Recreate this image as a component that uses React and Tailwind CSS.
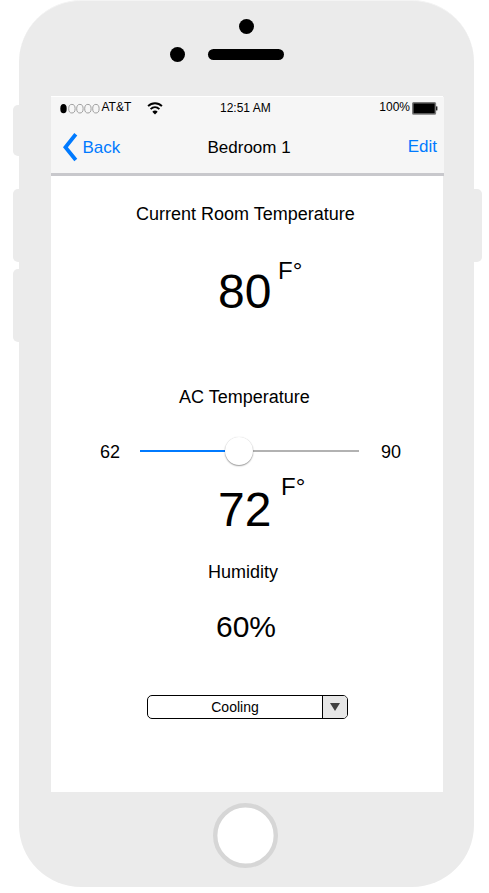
function SideButton({ className }) {
  return <span className={`absolute bg-[#ebebeb] ${className}`} />;
}

function SignalDots() {
  return (
    <svg className="mt-[5px] h-3 w-10 shrink-0" viewBox="0 0 40 12" fill="none">
      <ellipse cx="3.5" cy="6.7" rx="3.2" ry="4.6" fill="#000" />
      {[11.9, 19.9, 27.9, 35.9].map((cx) => (
        <ellipse key={cx} cx={cx} cy="6.7" rx="3.2" ry="4.3" stroke="#8a8a8a" strokeWidth="0.8" />
      ))}
    </svg>
  );
}

function WifiIcon() {
  return (
    <svg className="ml-4 mt-[5px] h-[13px] w-4 shrink-0" viewBox="0 0 16 13" fill="none" stroke="#000">
      <path d="M1.1 4.1C5 .2 11 .2 14.9 4.1" strokeWidth="1.9" />
      <path d="M3.6 7.1C6.2 4.7 9.8 4.7 12.4 7.1" strokeWidth="1.9" />
      <path d="M5.3 9.7C6.8 8.1 9.2 8.1 10.7 9.7L8 12.6Z" fill="#000" stroke="none" />
    </svg>
  );
}

function BatteryIcon() {
  return (
    <svg className="ml-[2px] mt-1 h-[14px] w-[26px] shrink-0" viewBox="0 0 26 14">
      <rect x="0.8" y="1.8" width="22.6" height="11.2" rx="0.8" fill="#000" stroke="#7a7a7a" strokeWidth="1.5" />
      <rect x="24" y="5.4" width="1.4" height="4" fill="#222" />
    </svg>
  );
}

function StatusBar() {
  return (
    <div className="flex h-[26px] items-start text-[12px] leading-[14px]">
      <div className="flex w-[168px] items-start pl-[9px]">
        <SignalDots />
        <span className="ml-[1.5px] mt-[3px]">AT&amp;T</span>
        <WifiIcon />
      </div>
      <span className="mt-1 w-[54px] pl-px whitespace-nowrap">12:51 AM</span>
      <div className="flex flex-1 items-start justify-end pr-[6px]">
        <span className="mt-[3px]">100%</span>
        <BatteryIcon />
      </div>
    </div>
  );
}

function NavBar() {
  return (
    <div className="flex flex-1 items-start text-[17px] leading-5">
      <button className="flex w-[156.5px] items-start pl-[12px] text-[#007aff]">
        <svg className="mt-[10px] h-[29px] w-[15px] shrink-0" viewBox="0 0 15 29" fill="none">
          <path d="M12.8 1.2L2.4 14.2L12.8 27" stroke="#007aff" strokeWidth="3.8" />
        </svg>
        <span className="ml-[4.5px] mt-[15px]">Back</span>
      </button>
      <span className="mt-[15px] whitespace-nowrap">Bedroom 1</span>
      <button className="ml-auto mr-[7px] mt-[14px] text-[#007aff]">Edit</button>
    </div>
  );
}

function Reading({ value, className, unitClass }) {
  return (
    <div className={`flex items-start pl-[167px] leading-none ${className}`}>
      <span className="mt-auto w-[53px] text-[48px]">{value}</span>
      <span className={`text-[24px] ${unitClass}`}>F°</span>
    </div>
  );
}

function TemperatureSlider({ min, max, value }) {
  const position = ((value - min) / (max - min)) * 100;
  return (
    <div className="mt-[29px] flex h-[30px] items-center pl-[49px] text-[18px] leading-5">
      <span className="mt-px w-[40px]">{min}</span>
      <div className="relative h-[2px] w-[219px] bg-[#b2b2b2]">
        <div className="h-full bg-[#007aff]" style={{ width: `${position}%` }} />
        <span className="absolute left-[84.5px] top-[-13.5px] size-[28.5px] rounded-full bg-white shadow-[0_1px_1.5px_rgba(0,0,0,0.4),0_0_1px_rgba(0,0,0,0.15)]" />
      </div>
      <span className="ml-[22px] mt-px">{max}</span>
    </div>
  );
}

function ModeSelect() {
  return (
    <button className="ml-[96px] mt-[53px] flex h-6 w-[201px] overflow-hidden rounded-[5px] border border-black bg-white text-[14px] leading-[22px]">
      <span className="flex-1 text-center">Cooling</span>
      <span className="flex h-full w-[25px] items-center justify-center border-l border-black bg-[#e6e6e6]">
        <svg className="h-2 w-[10px]" viewBox="0 0 10 8">
          <path d="M0 0H10L5 8Z" fill="#404040" />
        </svg>
      </span>
    </button>
  );
}

export default function App() {
  return (
    <div className="h-[893px] w-[489px] overflow-hidden bg-white pl-[19px] font-['Liberation_Sans',Arial,sans-serif] text-black">
      <div className="relative flex h-[887px] w-[455px] flex-col rounded-[62px] bg-[#ebebeb] border-t border-[#f4f4f4]">
        <SideButton className="left-[-6px] top-[104px] h-[51px] w-[6px] rounded-l-[5px]" />
        <SideButton className="left-[-6px] top-[188px] h-[73px] w-[6px] rounded-l-[5px]" />
        <SideButton className="left-[-6px] top-[268px] h-[73px] w-[6px] rounded-l-[5px]" />
        <SideButton className="right-[-8px] top-[188px] h-[73px] w-[8px] rounded-r-[5px]" />

        <div className="flex h-[95px] shrink-0 flex-col pt-[18px]">
          <span className="ml-[220px] size-[15px] rounded-full bg-black" />
          <div className="mt-[13px] flex items-center pl-[151px]">
            <span className="size-[15px] rounded-full bg-black" />
            <span className="ml-[23px] h-[11px] w-[76px] rounded-full bg-black" />
          </div>
        </div>

        <main className="ml-[32px] flex h-[695.5px] w-[392px] shrink-0 flex-col bg-white">
          <header className="mt-px flex h-[79px] w-[393px] shrink-0 flex-col border-b-[3px] border-[#c8c8cc] bg-[#f6f6f6]">
            <StatusBar />
            <NavBar />
          </header>

          <h2 className="mt-[28px] pl-[85px] text-[18px] leading-5">Current Room Temperature</h2>
          <Reading value="80" className="mt-[35px] h-[57px]" unitClass="ml-[7px]" />

          <h2 className="mt-[71px] pl-[128px] text-[18px] leading-5">AC Temperature</h2>
          <TemperatureSlider min={62} max={90} value={74.5} />
          <Reading value="72" className="mt-[9px] h-[59px]" unitClass="ml-[10px]" />

          <h2 className="mt-[28px] pl-[157px] text-[18px] leading-5">Humidity</h2>
          <p className="mt-[30px] pl-[165px] text-[30px] leading-none">60%</p>
          <ModeSelect />
        </main>

        <footer className="flex flex-1 justify-center pr-[2px] pt-[11.5px]">
          <svg className="size-[65px]" viewBox="0 0 65 65">
            <circle cx="32.5" cy="32.5" r="30.3" fill="#fff" stroke="#d6d6d6" strokeWidth="4.4" />
          </svg>
        </footer>
      </div>
    </div>
  );
}
